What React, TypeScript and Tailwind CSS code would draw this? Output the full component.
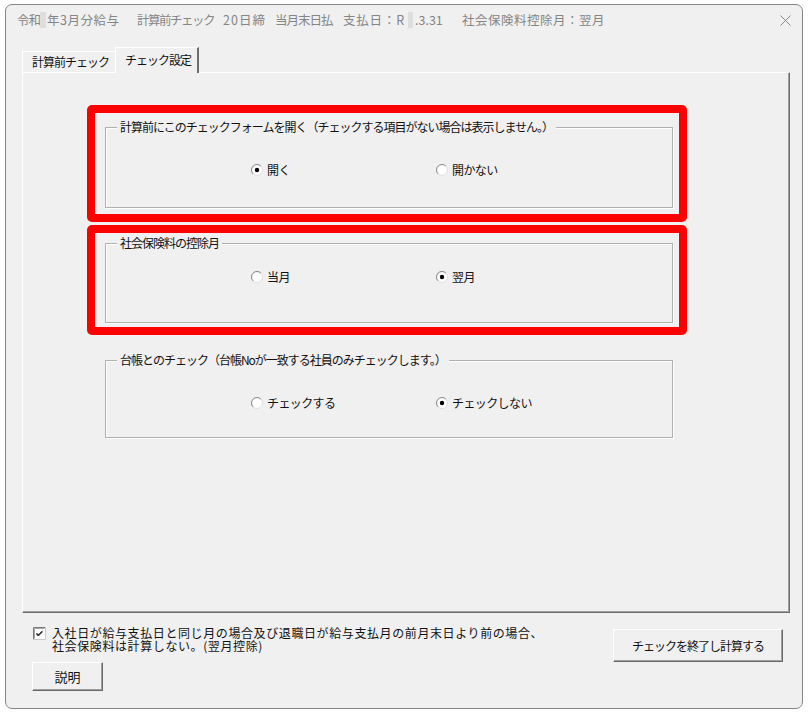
import React from "react";

function Radio({ checked }: { checked: boolean }) {
  return (
    <svg width="12" height="12" viewBox="0 0 12 12" className="shrink-0">
      <circle cx="6" cy="6" r="5.5" fill="#fff" stroke="#dedede" />
      <path d="M2.1 9.9 A5.5 5.5 0 0 1 9.9 2.1" fill="none" stroke="#8a8a8a" />
      {checked && <circle cx="6" cy="6" r="2.2" fill="#000" />}
    </svg>
  );
}

function Opt({ label, checked, wide }: { label: string; checked: boolean; wide?: boolean }) {
  return (
    <div className={wide ? "flex items-center gap-[4px] w-[185px]" : "flex items-center gap-[4px]"}>
      <Radio checked={checked} />
      <span className="text-[12px] leading-[14px] tracking-[-0.6px] whitespace-nowrap">{label}</span>
    </div>
  );
}

function Group({
  title,
  box,
  row,
  a,
  b,
  sel,
}: {
  title: string;
  box: string;
  row: string;
  a: string;
  b: string;
  sel: number;
}) {
  return (
    <div className={box}>
      <div className="-mt-[8px] h-[14px] flex">
        <span className="ml-[11px] px-[3px] bg-[#f0f0f0] text-[12px] leading-[14px] tracking-[-1px] whitespace-nowrap">
          {title}
        </span>
      </div>
      <div className={row}>
        <Opt label={a} checked={sel === 0} wide />
        <Opt label={b} checked={sel === 1} />
      </div>
    </div>
  );
}

export default function App() {
  return (
    <div className="w-[810px] h-[714px] bg-white pt-[4px] pl-[5px] font-['Noto_Sans_CJK_JP','Noto_Sans',sans-serif] text-[#111]">
      <div className="w-[798px] h-[705px] border border-[#858585] rounded-[7px] bg-[#f0f0f0] overflow-hidden flex flex-col">
        {/* title bar */}
        <div className="h-[30px] flex items-center text-[12.5px] leading-[16px] text-[#858585] whitespace-nowrap">
          <span className="ml-[11px] w-[23px] shrink-0 tracking-[-1px]">令和</span>
          <span className="w-[7px] shrink-0 flex"><span className="w-[6px] h-[16px] bg-[#dedede]" /></span>
          <span className="w-[90px] shrink-0 tracking-[0.5px]">年3月分給与</span>
          <span className="w-[86px] shrink-0 tracking-[-1.5px]">計算前チェック</span>
          <span className="w-[52px] shrink-0 tracking-[1px]">20日締</span>
          <span className="w-[68px] shrink-0 tracking-[-1px]">当月末日払</span>
          <span className="w-[65px] shrink-0 tracking-[0.8px]">支払日：R</span>
          <span className="w-[7px] shrink-0 flex"><span className="w-[5px] h-[16px] bg-[#dedede]" /></span>
          <span className="w-[47px] shrink-0">.3.31</span>
          <span className="shrink-0 tracking-[0.5px]">社会保険料控除月：翌月</span>
          <span className="ml-auto mr-[11px] flex items-center">
            <svg width="11" height="11" viewBox="0 0 11 11">
              <path d="M0.5 0.5 L10.5 10.5 M10.5 0.5 L0.5 10.5" stroke="#8a8a8a" strokeWidth="1" />
            </svg>
          </span>
        </div>

        {/* tabs */}
        <div className="mt-[12px] ml-[16px] h-[25px] flex items-end">
          <div className="w-[93px] h-[21px] border-t border-l border-white flex items-center pl-[9px] text-[12px] leading-[14px] tracking-[-1px] whitespace-nowrap">
            計算前チェック
          </div>
          <div className="relative z-10 w-[84px] h-[26px] -mb-[1px] bg-[#f0f0f0] border-t border-l border-white border-r-2 border-r-[#6e6e6e] flex items-center pl-[9px] pb-[2px] text-[12px] leading-[14px] tracking-[-1px] whitespace-nowrap">
            チェック設定
          </div>
        </div>

        {/* panel */}
        <div className="ml-[16px] w-[768px] h-[541px] border-t border-l border-white border-r border-b border-r-[#6e6e6e] border-b-[#6e6e6e] shadow-[inset_-1px_-1px_0_#a0a0a0] pt-[32px] flex flex-col">
          <div className="ml-[64px] w-[600px] h-[117px] border-[8px] border-[#ff0000] rounded-[5px] pl-[10px] pt-[14px]">
            <Group
              title="計算前にこのチェックフォームを開く（チェックする項目がない場合は表示しません。）"
              box="w-[568px] h-[81px] border border-[#b0b0b0] shadow-[1px_1px_0_#fff,inset_1px_1px_0_#fff]"
              row="mt-[29px] flex pl-[145px]"
              a="開く"
              b="開かない"
              sel={0}
            />
          </div>
          <div className="mt-[3px] ml-[64px] w-[600px] h-[110px] border-[8px] border-[#ff0000] rounded-[5px] pl-[10px] pt-[10px]">
            <Group
              title="社会保険料の控除月"
              box="w-[568px] h-[80px] border border-[#b0b0b0] shadow-[1px_1px_0_#fff,inset_1px_1px_0_#fff]"
              row="mt-[20px] flex pl-[145px]"
              a="当月"
              b="翌月"
              sel={1}
            />
          </div>
          <div className="mt-[25px] ml-[82px]">
            <Group
              title="台帳とのチェック（台帳Noが一致する社員のみチェックします。）"
              box="w-[568px] h-[78px] border border-[#b0b0b0] shadow-[1px_1px_0_#fff,inset_1px_1px_0_#fff]"
              row="mt-[29px] flex pl-[145px]"
              a="チェックする"
              b="チェックしない"
              sel={1}
            />
          </div>
        </div>

        {/* bottom */}
        <div className="mt-[13px] pl-[27px] pr-[19px] flex justify-between items-start">
          <div className="flex flex-col">
            <div className="flex items-start gap-[6px]">
              <svg width="13" height="13" viewBox="0 0 13 13" className="shrink-0 mt-[1px]">
                <rect x="0" y="0" width="13" height="13" fill="#fff" />
                <path d="M0.5 12.5 V0.5 H12.5" fill="none" stroke="#7a7a7a" />
                <path d="M1.5 11.5 V1.5 H11.5" fill="none" stroke="#a8a8a8" />
                <path d="M0.5 12.5 H12.5 V0.5" fill="none" stroke="#c8c8c8" />
                <path d="M3.5 6 L5.3 8 L9.5 3.8 M3.5 7 L5.3 9 L9.5 4.8" fill="none" stroke="#000" strokeWidth="1" />
              </svg>
              <div className="text-[12px] leading-[13px] tracking-[0.6px] whitespace-nowrap">
                <div>入社日が給与支払日と同じ月の場合及び退職日が給与支払月の前月末日より前の場合、</div>
                <div>社会保険料は計算しない。(翌月控除)</div>
              </div>
            </div>
            <button className="mt-[10px] -ml-[1px] w-[71px] h-[29px] bg-[#f0f0f0] border border-t-white border-l-white border-r-[#696969] border-b-[#696969] shadow-[inset_-1px_-1px_0_#a0a0a0] text-[13px] leading-[14px] flex items-center justify-center">
              説明
            </button>
          </div>
          <button className="mt-[3px] w-[170px] h-[33px] bg-[#f0f0f0] border border-t-white border-l-white border-r-[#696969] border-b-[#696969] shadow-[inset_-1px_-1px_0_#a0a0a0] text-[12px] leading-[14px] tracking-[-1px] flex items-center justify-center whitespace-nowrap">
            チェックを終了し計算する
          </button>
        </div>
      </div>
    </div>
  );
}
